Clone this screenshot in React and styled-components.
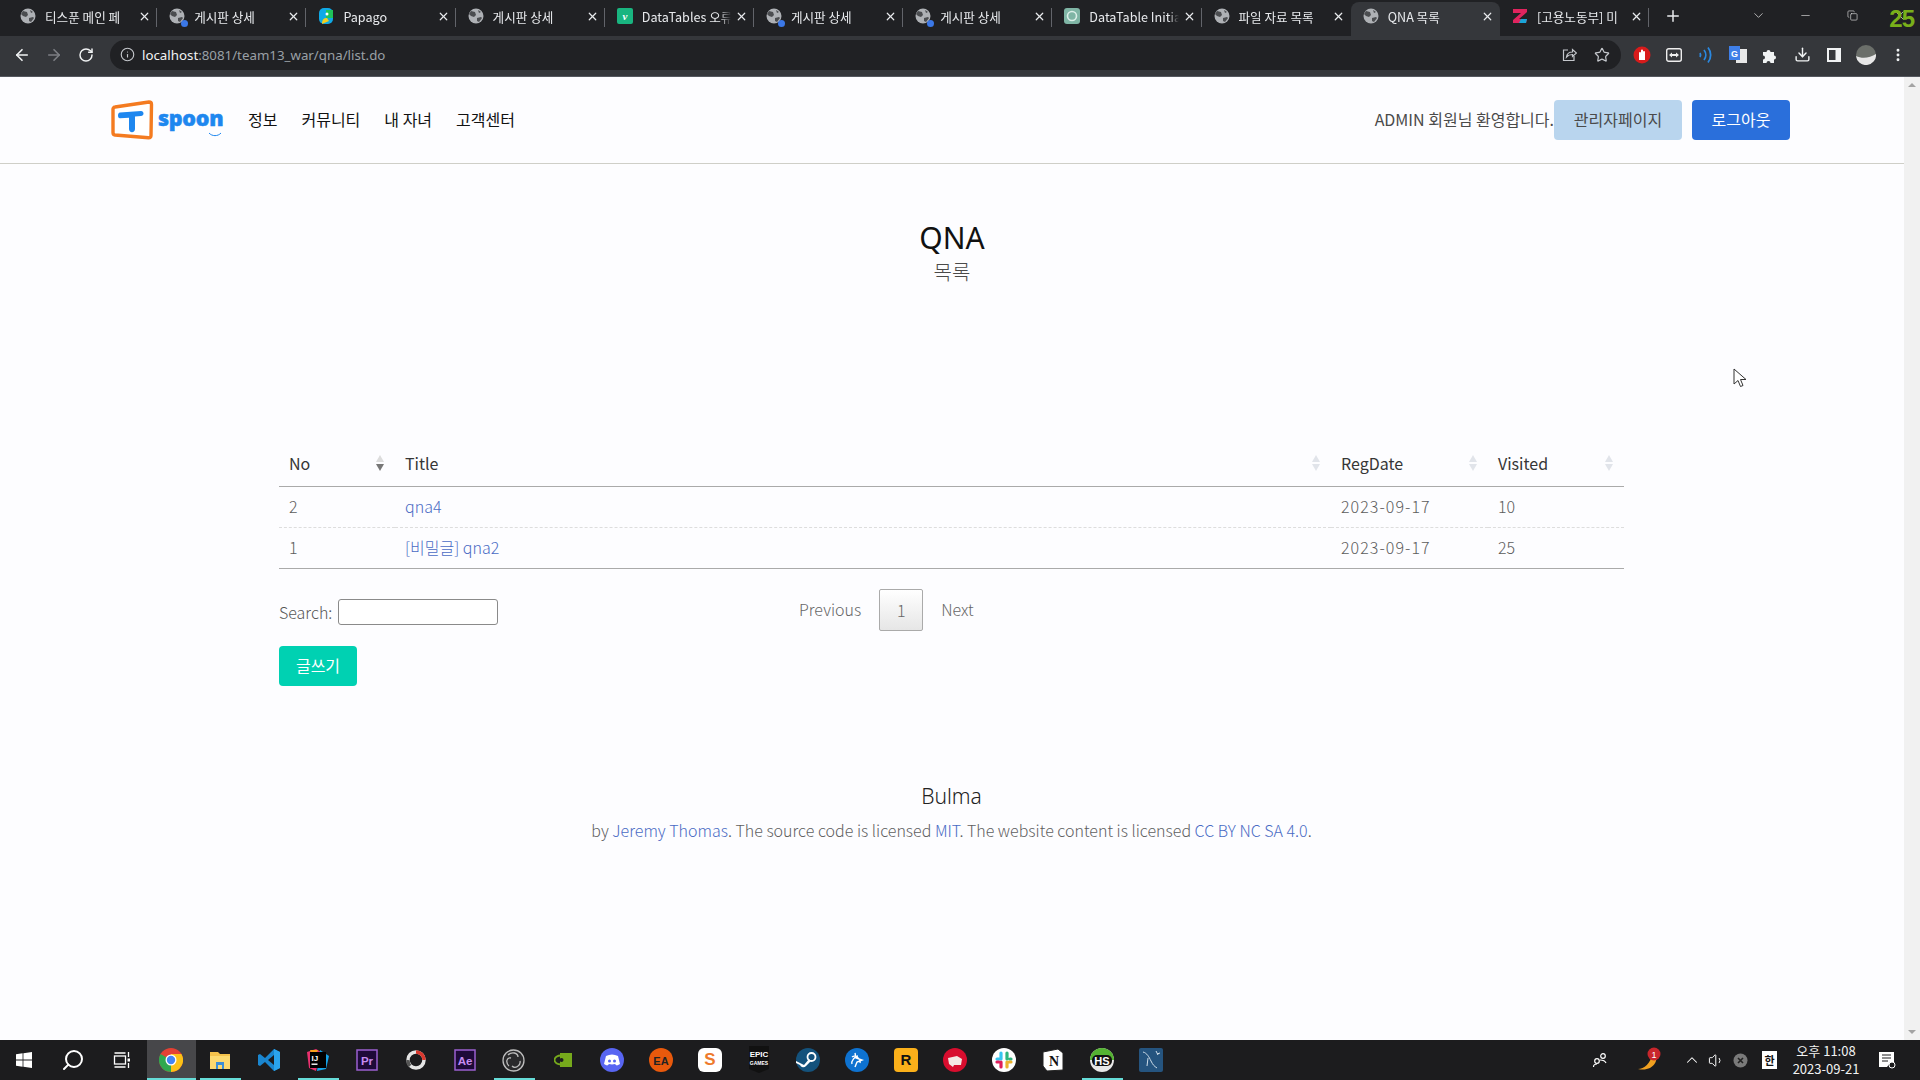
import React from 'react';
import styled, { createGlobalStyle } from 'styled-components';
import {
  ArrowLeft, ArrowRight, RotateCw, Info, Star, Download, EllipsisVertical, Search,
  Minus, X, Plus, ChevronDown, ChevronUp, Volume1, Copy,
} from 'lucide-react';

const GlobalStyle = createGlobalStyle`
  html, body { margin: 0; padding: 0; height: 100%; overflow: hidden; }
  body { font-family: "Noto Sans", "Noto Sans CJK KR", sans-serif; background: #fdfdff; }
  * { box-sizing: border-box; }
`;

const Screen = styled.div`
  position: relative;
  width: 1920px;
  height: 1080px;
  display: flex;
  flex-direction: column;
  overflow: hidden;
`;

/* browser chrome */
const TabStrip = styled.div`
  position: relative;
  height: 36px;
  flex: none;
  display: flex;
  align-items: stretch;
  padding: 0 0 0 8px;
  background: #202124;
  font-family: "Noto Sans CJK KR", "Noto Sans", sans-serif;
`;
const Tab = styled.div`
  width: 149.2px;
  flex: none;
  display: flex;
  align-items: center;
  margin-top: 2px;
  padding: 0 6px 6px 12px;
  gap: 9px;
  color: #e8eaed;
  font-size: 12.6px;
  border-radius: 8px 8px 0 0;
  background: ${p => (p.$active ? '#35373b' : 'transparent')};
  position: relative;
  &::after {
    content: '';
    position: absolute;
    right: 0;
    top: 6px;
    bottom: 9px;
    width: 1px;
    background: ${p => (p.$hideSep ? 'transparent' : '#62646a')};
  }
`;
const TabTitle = styled.span`
  flex: 1;
  min-width: 0;
  margin-right: -5px;
  white-space: nowrap;
  overflow: hidden;
  -webkit-mask-image: linear-gradient(to right, #000 88%, transparent 100%);
  mask-image: linear-gradient(to right, #000 88%, transparent 100%);
`;
const Favicon = styled.span`
  position: relative;
  width: 16px;
  height: 16px;
  flex: none;
  display: flex;
`;
const FavDot = styled.span`
  position: absolute;
  right: -3px;
  bottom: -3px;
  width: 7px;
  height: 7px;
  border-radius: 50%;
  background: #3b78e7;
`;
const NewTab = styled.div`
  width: 34px;
  margin-left: 7px;
  display: flex;
  align-items: center;
  justify-content: center;
  color: #e8eaed;
  padding-bottom: 5px;
`;
const WindowControls = styled.div`
  margin-left: auto;
  margin-right: -3px;
  display: flex;
  align-items: center;
  color: #e0e0e0;
  padding-bottom: 6px;
`;
const WinButton = styled.div`
  width: 47px;
  height: 30px;
  display: flex;
  align-items: center;
  justify-content: center;
`;
const Overlay25 = styled.span`
  position: absolute;
  right: 6px;
  top: 5px;
  font: bold 24px "Liberation Sans", sans-serif;
  letter-spacing: -1px;
  color: #79b01a;
`;
const Toolbar = styled.div`
  height: 41px;
  flex: none;
  display: flex;
  align-items: center;
  background: #35373b;
  border-bottom: 1px solid #55585f;
  padding: 0 8px 3px 6px;
  color: #e8eaed;
`;
const NavButton = styled.div`
  width: 32px;
  height: 32px;
  flex: none;
  display: flex;
  align-items: center;
  justify-content: center;
  color: ${p => (p.$dim ? '#7d7f84' : '#f1f3f4')};
`;
const Omnibox = styled.div`
  width: 1511px;
  height: 30px;
  margin-left: 8px;
  flex: none;
  display: flex;
  align-items: center;
  border-radius: 15px;
  background: #202124;
  padding: 0 11px 0 10px;
  gap: 7px;
  color: #9aa0a6;
  font-size: 13.300px;
`;
const UrlHost = styled.span`
  color: #f1f3f4;
`;
const OmniActions = styled.div`
  margin-left: auto;
  display: flex;
  align-items: center;
  gap: 17px;
  color: #c4c7cc;
`;
const ExtTray = styled.div`
  display: flex;
  align-items: center;
  margin-left: 5px;
`;
const ExtButton = styled.div`
  width: 32px;
  flex: none;
  display: flex;
  align-items: center;
  justify-content: center;
  color: #f1f3f4;
`;

/* page */
const Viewport = styled.div`
  flex: 1;
  min-height: 0;
  display: flex;
`;
const Page = styled.div`
  flex: 1;
  min-width: 0;
  background: #fdfdff;
  color: #4a4a4a;
  font-family: "Noto Sans CJK KR", "Noto Sans", sans-serif;
  font-size: 16px;
  font-weight: 300;
`;
const Scrollbar = styled.div`
  width: 16px;
  flex: none;
  background: #f1f1f1;
  display: flex;
  flex-direction: column;
  justify-content: space-between;
  align-items: center;
  padding: 6px 0;
`;
const ScrollArrow = styled.span`
  width: 0;
  height: 0;
  border-left: 4px solid transparent;
  border-right: 4px solid transparent;
  ${p => (p.$down ? 'border-top: 4px solid #a3a3a3;' : 'border-bottom: 4px solid #a3a3a3;')}
`;
const SiteHeader = styled.header`
  height: 87px;
  display: flex;
  align-items: center;
  padding: 0 114px 0 111px;
  border-bottom: 1px solid #cfcfc8;
`;
const Logo = styled.div`
  position: relative;
  width: 112px;
  height: 42px;
  flex: none;
  display: flex;
  align-items: center;
  gap: 3px;
`;
const LogoWord = styled.span`
  font: 800 21.500px/1 "Open Sans", Lato, sans-serif;
  letter-spacing: -.3px;
  -webkit-text-stroke: .5px #1e87ef;
  color: #1e87ef;
  margin-top: -4px;
`;
const LogoSmile = styled.svg`
  position: absolute;
  right: 1px;
  bottom: 4px;
`;
const SiteNav = styled.nav`
  display: flex;
  gap: 24px;
  margin-left: 25px;
  padding-bottom: 2px;
  color: #111;
  font-weight: 400;
`;
const UserBox = styled.div`
  margin-left: auto;
  display: flex;
  align-items: center;
`;
const Welcome = styled.span`
  color: #4a4a4a;
  font-weight: 400;
  padding-bottom: 2px;
  white-space: nowrap;
`;
const Button = styled.div`
  height: 40px;
  width: ${p => p.$w}px;
  margin-left: ${p => p.$ml || 0}px;
  padding-bottom: 2px;
  display: flex;
  align-items: center;
  justify-content: center;
  border-radius: 4px;
  background: ${p => p.$bg};
  color: ${p => p.$fg};
  font-weight: 400;
`;
const Hero = styled.div`
  padding-top: 54px;
  text-align: center;
`;
const HeroTitle = styled.h1`
  margin: 0;
  font-size: 30px;
  line-height: 40px;
  font-weight: 400;
  color: #111;
  font-family: "Noto Sans", sans-serif;
`;
const HeroSub = styled.h2`
  margin: 1px 0 0;
  font-size: 20px;
  line-height: 26px;
  font-weight: 300;
  color: #4a4a4a;
`;
const Content = styled.section`
  margin-top: 156px;
  padding: 0 280px 0 279px;
`;
const Table = styled.table`
  width: 100%;
  table-layout: fixed;
  border-collapse: collapse;
  border-bottom: 1px solid #aaa;
`;
const Th = styled.th`
  width: ${p => p.$w};
  height: 45px;
  padding: 0 10px;
  font-weight: 400;
  text-align: left;
  color: #363636;
  border-bottom: 1px solid #aaa;
`;
const ThInner = styled.div`
  display: flex;
  align-items: center;
  justify-content: space-between;
`;
const Td = styled.td`
  height: 41px;
  padding: 0 10px 2px;
  color: #5c5c5c;
`;
const DateTd = styled(Td)`
  letter-spacing: 1.05px;
`;
const Tr = styled.tr`
  & + & td { border-top: 1px dashed #ddd; }
`;
const Link = styled.a`
  color: #4a6bc4;
  text-decoration: none;
`;
const ControlRow = styled.div`
  display: flex;
  align-items: center;
  margin-top: 20px;
  height: 42px;
`;
const SearchBox = styled.label`
  width: 520px;
  flex: none;
  display: flex;
  align-items: center;
  gap: 6px;
  padding-top: 5px;
  color: #555;
`;
const SearchInput = styled.input`
  width: 160px;
  height: 26px;
  border: 1px solid #8a8a8a;
  border-radius: 3px;
  background: #fff;
  outline: 0;
`;
const Pagination = styled.div`
  display: flex;
  align-items: center;
  gap: 18px;
  color: #666;
`;
const PageLabel = styled.span`
  padding-bottom: 2px;
`;
const PageCurrent = styled.div`
  width: 44px;
  height: 42px;
  display: flex;
  align-items: center;
  justify-content: center;
  border: 1px solid #aaa;
  border-radius: 2px;
  background: linear-gradient(to bottom, #fff 0%, #e6e6e6 100%);
`;
const WriteRow = styled.div`
  margin-top: 15px;
`;
const SiteFooter = styled.footer`
  margin-top: 95px;
  text-align: center;
`;
const FooterTitle = styled.div`
  font-size: 21px;
  line-height: 30px;
  color: #222;
  font-family: "Noto Sans", sans-serif;
`;
const FooterText = styled.p`
  margin: 7px 0 0;
  line-height: 24px;
  font-size: 16px;
  color: #5f5f5f;
`;
const Cursor = styled.svg`
  position: absolute;
  left: 1733px;
  top: 368px;
`;

/* taskbar */
const Taskbar = styled.div`
  height: 40px;
  flex: none;
  display: flex;
  align-items: center;
  background: #1c1c1e;
  color: #fff;
  font-family: "Noto Sans CJK KR", "Noto Sans", sans-serif;
`;
const TaskItem = styled.div`
  position: relative;
  width: 49px;
  height: 40px;
  flex: none;
  display: flex;
  align-items: center;
  justify-content: center;
  padding-right: 2px;
  background: ${p => (p.$active ? '#47474a' : 'transparent')};
  &::after {
    content: '';
    display: ${p => (p.$open ? 'block' : 'none')};
    position: absolute;
    bottom: 0;
    left: ${p => (p.$active ? 0 : 4)}px;
    right: ${p => (p.$active ? 0 : 4)}px;
    height: 2px;
    background: #66dcd8;
  }
`;
const SysTray = styled.div`
  margin-left: auto;
  display: flex;
  align-items: center;
  height: 40px;
`;
const TrayItem = styled.div`
  width: ${p => p.$w}px;
  padding-right: ${p => p.$pr || 0}px;
  flex: none;
  display: flex;
  align-items: center;
  justify-content: center;
`;
const Clock = styled.div`
  width: 68px;
  margin-left: 6px;
  white-space: nowrap;
  display: flex;
  flex-direction: column;
  align-items: center;
  font-size: 13px;
  line-height: 18px;
  color: #f2f2f2;
`;

/* small drawings */
const Globe = () => (
  <svg width="16" height="16" viewBox="0 0 16 16">
    <circle cx="8" cy="8" r="7.5" fill="#aeb1b5" />
    <path d="M3 3l4 1 1 3-2 2-3-1-2-2zM9 10l4-1 1 1-3 4-2-1zM10 2l3 2-2 1z" fill="#4b4d50" />
  </svg>
);
const PapagoIcon = () => (
  <svg width="16" height="16" viewBox="0 0 16 16">
    <rect x="1" y="0" width="14" height="16" rx="5" fill="#0fa9e6" />
    <path d="M8 2h7v8H8z" fill="#1fc35a" />
    <circle cx="9" cy="6" r="1.5" fill="#fff" />
    <path d="M4 16c0-5 2-6 5-6l2 3z" fill="#f5d020" />
  </svg>
);
const VueIcon = () => (
  <svg width="16" height="16" viewBox="0 0 16 16">
    <rect width="16" height="16" rx="2" fill="#19b580" />
    <text x="8" y="12" fontSize="11" fontStyle="italic" fontWeight="700" textAnchor="middle" fill="#fff" fontFamily="Liberation Serif">v</text>
  </svg>
);
const GptIcon = () => (
  <svg width="16" height="16" viewBox="0 0 16 16">
    <rect width="16" height="16" rx="3" fill="#7fb5a5" />
    <circle cx="8" cy="8" r="4.5" fill="none" stroke="#dbeee8" strokeWidth="1.6" />
  </svg>
);
const ZIcon = () => (
  <svg width="16" height="16" viewBox="0 0 16 16">
    <path d="M1 1h14v3L7 11h8l-1 4H1v-3l8-7H1z" fill="#e0245e" />
    <path d="M9 11h6l-1 4H7z" fill="#1aa5d8" />
  </svg>
);
const Windows = () => (
  <svg width="16" height="16" viewBox="0 0 16 16" fill="#fff">
    <path d="M0 2.2l6.6-.9v6.2H0zM7.4 1.2L16 0v7.5H7.4zM0 8.4h6.6v6.3L0 13.8zM7.4 8.4H16V16l-8.6-1.2z" />
  </svg>
);
const TaskView = () => (
  <svg width="18" height="18" viewBox="0 0 18 18" fill="none" stroke="#fff" strokeWidth="1.3">
    <rect x="1.5" y="5" width="11" height="8" />
    <path d="M1.5 2h11M1.5 16h11M15.5 1v5M15.5 12v5" />
    <rect x="14.5" y="7.5" width="2.5" height="3" fill="#fff" stroke="none" />
  </svg>
);
const ChromeIcon = () => (
  <svg width="24" height="24" viewBox="0 0 24 24">
    <circle cx="12" cy="12" r="12" fill="#e44134" />
    <path d="M12 12L1.6 6A12 12 0 0 0 12 24l5-10z" fill="#2fa84f" />
    <path d="M12 6h10.4A12 12 0 0 1 12 24z" fill="#fbc116" />
    <circle cx="12" cy="12" r="5.5" fill="#fff" />
    <circle cx="12" cy="12" r="4.2" fill="#4385f4" />
  </svg>
);
const FolderIcon = () => (
  <svg width="22" height="22" viewBox="0 0 22 22">
    <path d="M1 3h8l2 2h10v15H1z" fill="#f3c14b" />
    <path d="M1 7h20v13H1z" fill="#fbd970" />
    <path d="M7 20v-7h8v7h-2v-4H9v4z" fill="#3c8fd6" />
  </svg>
);
const VSCodeIcon = () => (
  <svg width="24" height="24" viewBox="0 0 24 24">
    <path d="M17 1l6 3v16l-6 3-9-9-5 4-2-1v-10l2-1 5 4z" fill="#1a86d0" />
    <path d="M17 7l-6 5 6 5z" fill="#1c1c1e" />
    <path d="M17 1l6 3v16l-6 3z" fill="#2aa4ee" />
  </svg>
);
const IJIcon = () => (
  <svg width="24" height="24" viewBox="0 0 24 24">
    <path d="M1 4l9-3 5 3-5 19-7-3z" fill="#e8306e" />
    <path d="M14 2l9 6-3 13-9 2z" fill="#14a3e8" />
    <path d="M4 2l8 0-5 10z" fill="#f9a11b" />
    <rect x="4" y="4" width="16" height="16" fill="#000" />
    <text x="5.5" y="12.5" fontSize="8" fontWeight="700" fill="#fff" fontFamily="Liberation Sans">IJ</text>
    <rect x="5.5" y="15.5" width="6" height="1.4" fill="#fff" />
  </svg>
);
const AdobeIcon = ({ label }) => (
  <svg width="22" height="22" viewBox="0 0 22 22">
    <rect x="1" y="1" width="20" height="20" fill="#1e0a38" stroke="#9a5fd0" strokeWidth="1.5" />
    <text x="11" y="15.5" fontSize="11.5" fontWeight="700" textAnchor="middle" fill="#c68cf0" fontFamily="Liberation Sans">{label}</text>
  </svg>
);
const DavinciRing = () => (
  <svg width="22" height="22" viewBox="0 0 22 22" fill="none" strokeWidth="3.5">
    <circle cx="11" cy="11" r="8" stroke="#e5e5e5" />
    <path d="M11 3a8 8 0 0 1 8 8" stroke="#d9382e" />
    <path d="M5 17a8 8 0 0 1-2-6" stroke="#555" />
  </svg>
);
const ObsIcon = () => (
  <svg width="23" height="23" viewBox="0 0 23 23" fill="none" stroke="#bdbdbd" strokeWidth="1.3">
    <circle cx="11.5" cy="11.5" r="10.5" fill="#2a2a2c" />
    <path d="M6 6c4-4 10-2 10 2M18 12c1 5-5 8-8 5M7 17C3 13 5 8 9 9" />
  </svg>
);
const NvidiaIcon = () => (
  <svg width="18" height="14" viewBox="0 0 18 14">
    <rect x="6" y="0" width="12" height="14" fill="#76a91c" />
    <ellipse cx="7" cy="7" rx="6.5" ry="4.5" fill="none" stroke="#76a91c" strokeWidth="1.8" />
    <circle cx="7.5" cy="7" r="2" fill="#1c1c1e" />
  </svg>
);
const DiscordIcon = () => (
  <svg width="24" height="24" viewBox="0 0 24 24">
    <ellipse cx="12" cy="12" rx="12" ry="12" fill="#5865f2" />
    <path d="M6 8c4-2 8-2 12 0l2 8c-2 1-3 2-4 1l-1-1c-2 .6-4 .6-6 0l-1 1c-1 1-2 0-4-1z" fill="#fff" />
    <circle cx="9.5" cy="13" r="1.5" fill="#5865f2" />
    <circle cx="14.5" cy="13" r="1.5" fill="#5865f2" />
  </svg>
);
const BadgeIcon = ({ bg, fg, label, shape, size = 11, stroke }) => (
  <svg width="24" height="24" viewBox="0 0 24 24">
    {shape === 'circle'
      ? <circle cx="12" cy="12" r="12" fill={bg} />
      : <rect width="24" height="24" rx={shape === 'square' ? 4 : 6} fill={bg} stroke={stroke || 'none'} />}
    <text x="12" y="16.5" fontSize={size} fontWeight="700" textAnchor="middle" fill={fg} fontFamily="Liberation Sans">{label}</text>
  </svg>
);
const EpicIcon = () => (
  <svg width="20" height="28" viewBox="0 0 20 28">
    <path d="M0 0h20v23l-10 4-10-4z" fill="#111" />
    <text x="10" y="11" fontSize="8" fontWeight="700" textAnchor="middle" fill="#fff" fontFamily="Liberation Sans">EPIC</text>
    <text x="10" y="19" fontSize="5" fontWeight="700" textAnchor="middle" fill="#fff" fontFamily="Liberation Sans">GAMES</text>
  </svg>
);
const SteamIcon = () => (
  <svg width="24" height="24" viewBox="0 0 24 24">
    <circle cx="12" cy="12" r="12" fill="#14527c" />
    <circle cx="15.5" cy="9" r="4" fill="none" stroke="#fff" strokeWidth="1.8" />
    <path d="M0 13l8 4 5-6 2 2-5 5a3.5 3.5 0 0 1-6-1L0 15z" fill="#fff" />
  </svg>
);
const BattleIcon = () => (
  <svg width="24" height="24" viewBox="0 0 24 24">
    <circle cx="12" cy="12" r="12" fill="#0e72d0" />
    <path d="M10 5l1 5 6 2-5 2-2 5M7 9c4-3 9 3 8 6M7 16c-1-3 3-8 6-8" fill="none" stroke="#fff" strokeWidth="1.4" />
  </svg>
);
const RiotIcon = () => (
  <svg width="24" height="24" viewBox="0 0 24 24">
    <circle cx="12" cy="12" r="12" fill="#d80d2e" />
    <path d="M5 10l9-2 5 3-1 6H11l-1 2-4-3z" fill="#f4e8e4" />
  </svg>
);
const SlackIcon = () => (
  <svg width="24" height="24" viewBox="0 0 24 24" strokeWidth="3.2" strokeLinecap="round">
    <circle cx="12" cy="12" r="12" fill="#fff" />
    <path d="M9 5v6M5 11h2" stroke="#36c5f0" />
    <path d="M15 5v6M19 11h-1" stroke="#2eb67d" />
    <path d="M15 19v-5M19 14h-2" stroke="#ecb22e" />
    <path d="M9 19v-5M5 14h2" stroke="#e01e5a" />
  </svg>
);
const NotionIcon = () => (
  <svg width="24" height="24" viewBox="0 0 24 24">
    <path d="M2 4l15-3 5 4v17l-16 1-4-5z" fill="#fff" stroke="#222" strokeWidth="1" />
    <text x="13" y="18" fontSize="14" fontWeight="700" textAnchor="middle" fill="#111" fontFamily="Liberation Serif">N</text>
  </svg>
);
const HsIcon = () => (
  <svg width="24" height="24" viewBox="0 0 24 24">
    <circle cx="12" cy="12" r="12" fill="#e8e8e8" />
    <path d="M0 12a12 12 0 0 1 24 0z" fill="#54b232" />
    <rect x="2" y="7" width="20" height="11" rx="5" fill="#111" />
    <text x="12" y="16.5" fontSize="11" fontWeight="700" textAnchor="middle" fill="#fff" fontFamily="Liberation Sans">HS</text>
  </svg>
);
const MysqlIcon = () => (
  <svg width="24" height="24" viewBox="0 0 24 24">
    <rect width="24" height="24" rx="2" fill="#25547f" />
    <path d="M4 4c4 1 6 5 8 9s3 5 6 7M8 18l1-8M17 3l2 4M21 5l-3 1" fill="none" stroke="#cfdde9" strokeWidth="1" />
  </svg>
);
const TrayFlame = () => (
  <svg width="26" height="28" viewBox="0 0 26 28">
    <path d="M20 6c3 9-3 20-18 17 6 0 13-6 14-15z" fill="#f0a020" />
    <circle cx="18" cy="8" r="6.5" fill="#c8262c" />
    <text x="18" y="11.5" fontSize="9" textAnchor="middle" fill="#fff" fontFamily="Liberation Sans">1</text>
  </svg>
);
const People = () => (
  <svg width="16" height="16" viewBox="0 0 16 16" fill="none" stroke="#fff" strokeWidth="1.2">
    <circle cx="5" cy="9" r="2.3" />
    <circle cx="11" cy="4" r="2.3" />
    <path d="M1.5 15c0-2 1-3 3.5-3M8 8c2.5 0 5 .5 6 3" />
  </svg>
);
const MutedNet = () => (
  <svg width="15" height="15" viewBox="0 0 15 15">
    <circle cx="7.5" cy="7.5" r="7" fill="#7a7a7a" />
    <path d="M5 5l5 5M10 5l-5 5" stroke="#222" strokeWidth="1.6" />
  </svg>
);
const ImeBox = () => (
  <svg width="15" height="18" viewBox="0 0 15 18">
    <rect width="15" height="18" fill="#fff" />
    <text x="7.5" y="13.5" fontSize="11" fontWeight="700" textAnchor="middle" fill="#111" fontFamily="Noto Sans CJK KR">한</text>
  </svg>
);
const NotifyIcon = () => (
  <svg width="18" height="18" viewBox="0 0 18 18">
    <path d="M1 1h15v11h-4l-3 4H1z" fill="#fff" />
    <path d="M4 4h9M4 7h9M4 10h6" stroke="#1c1c1e" strokeWidth="1" />
    <circle cx="14" cy="14" r="3" fill="#1c1c1e" stroke="#fff" />
  </svg>
);
const ShareBox = () => (
  <svg width="15" height="15" viewBox="0 0 15 15" fill="none" stroke="#c4c7cc" strokeWidth="1.2">
    <path d="M6 3H1.5v10.5H12V9" />
    <path d="M4.5 10c.5-3.5 3-5 6-5V2.5L14.5 6l-4 3.5V7.5c-2.5 0-4.5.8-6 2.5z" />
  </svg>
);
const AdblockIcon = () => (
  <svg width="18" height="18" viewBox="0 0 18 18">
    <circle cx="9" cy="9" r="8.5" fill="#d81b1b" />
    <path d="M6 14V7a1 1 0 0 1 2 0V4.5a1 1 0 0 1 2 0V6a1 1 0 0 1 2 0v8z" fill="#fff" />
  </svg>
);
const MediaIcon = () => (
  <svg width="16" height="14" viewBox="0 0 16 14">
    <rect x=".7" y=".7" width="14.6" height="12.6" rx="2" fill="none" stroke="#eee" strokeWidth="1.4" />
    <path d="M3 7l3-2.5v5zM13 7l-3-2.5v5zM6 6h4v2H6z" fill="#eee" />
  </svg>
);
const WaveIcon = () => (
  <svg width="16" height="18" viewBox="0 0 16 18" fill="none" stroke="#2a88e0" strokeWidth="1.8">
    <path d="M2 7a4 4 0 0 1 0 4M6 4a8 8 0 0 1 0 10M10 1.500a12 12 0 0 1 0 15" />
  </svg>
);
const TranslateIcon = () => (
  <svg width="18" height="18" viewBox="0 0 18 18">
    <rect x="7" y="3" width="11" height="14" fill="#e8e8e8" />
    <rect x="0" y="0" width="11" height="14" fill="#3f7fe8" />
    <text x="5.5" y="10.5" fontSize="9" fontWeight="700" textAnchor="middle" fill="#fff" fontFamily="Liberation Sans">G</text>
  </svg>
);
const PuzzleIcon = () => (
  <svg width="16" height="16" viewBox="0 0 16 16" fill="#f1f3f4">
    <path d="M1 5h3.500a2 2 0 1 1 4 0H12v3.500a2 2 0 1 1 0 4V16H8.500a2 2 0 1 0-4 0H1v-3.500a2 2 0 1 0 0-4z" />
  </svg>
);
const SidePanel = () => (
  <svg width="14" height="14" viewBox="0 0 14 14">
    <path d="M0 0h14v14H0z" fill="#f1f3f4" />
    <path d="M2 2h6.500v10H2z" fill="#35373b" />
  </svg>
);
const Avatar = () => (
  <svg width="20" height="20" viewBox="0 0 20 20">
    <circle cx="10" cy="10" r="10" fill="#6b6f6a" />
    <path d="M0 11c6 3 14 2 20-2a10 10 0 0 1-20 2z" fill="#e7e7e7" />
  </svg>
);
const TLogo = () => (
  <svg width="44" height="42" viewBox="0 0 44 42" style={{ flex: 'none' }}>
    <path d="M4 8l34-5c1.500 0 2.500 1 2.500 2.500l-.5 31c0 1.500-1 2.500-2.500 2.300L4 36c-1.500-.2-2-1-2-2.500L2 10c0-1 1-2 2-2z" fill="#fff" stroke="#f47b20" strokeWidth="3.400" strokeLinejoin="round" />
    <path d="M9 13.500l21-1.500c1.500 0 2.500 1 2.500 2.500s-1 2.500-2.500 2.500l-6 .4V30c0 2-1.300 3.200-3 3.200s-3-1.200-3-3.200V18.800l-9 .5C7.700 19.400 7 18 7 16.500s.7-2.800 2-3z" fill="#1e87ef" />
  </svg>
);

const TABS = [
  { title: '티스푼 메인 페', icon: <Globe /> },
  { title: '게시판 상세', icon: <Globe />, dot: true },
  { title: 'Papago', icon: <PapagoIcon /> },
  { title: '게시판 상세', icon: <Globe /> },
  { title: 'DataTables 오류', icon: <VueIcon /> },
  { title: '게시판 상세', icon: <Globe />, dot: true },
  { title: '게시판 상세', icon: <Globe />, dot: true },
  { title: 'DataTable Initia', icon: <GptIcon /> },
  { title: '파일 자료 목록', icon: <Globe />, hideSep: true },
  { title: 'QNA 목록', icon: <Globe />, active: true, hideSep: true },
  { title: '[고용노동부] 미', icon: <ZIcon /> },
];

const TASK_ITEMS = [
  { icon: <Windows /> },
  { icon: <Search size={24} strokeWidth={2} style={{ transform: 'scaleX(-1)' }} /> },
  { icon: <TaskView /> },
  { icon: <ChromeIcon />, open: true, active: true },
  { icon: <FolderIcon />, open: true },
  { icon: <VSCodeIcon /> },
  { icon: <IJIcon />, open: true },
  { icon: <AdobeIcon label="Pr" /> },
  { icon: <DavinciRing /> },
  { icon: <AdobeIcon label="Ae" /> },
  { icon: <ObsIcon />, open: true },
  { icon: <NvidiaIcon /> },
  { icon: <DiscordIcon /> },
  { icon: <BadgeIcon bg="#e8590c" fg="#222" label="EA" shape="circle" /> },
  { icon: <BadgeIcon bg="#fff" fg="#ee7a2b" label="S" size={17} /> },
  { icon: <EpicIcon /> },
  { icon: <SteamIcon /> },
  { icon: <BattleIcon /> },
  { icon: <BadgeIcon bg="#fbb01a" fg="#111" label="R" size={15} shape="square" /> },
  { icon: <RiotIcon /> },
  { icon: <SlackIcon /> },
  { icon: <NotionIcon /> },
  { icon: <HsIcon />, open: true },
  { icon: <MysqlIcon /> },
];

const SortIcon = ({ active }) => (
  <svg width="10" height="18" viewBox="0 0 10 18">
    <path d="M5 1l4 7H1z" fill={active ? '#dcdcdc' : '#e1e4ea'} />
    <path d="M5 17l4-7H1z" fill={active ? '#777' : '#e1e4ea'} />
  </svg>
);

function App() {
  return (
    <Screen>
      <GlobalStyle />
      <TabStrip>
        {TABS.map((tab, i) => (
          <Tab key={i} $active={tab.active} $hideSep={tab.hideSep}>
            <Favicon>{tab.icon}{tab.dot && <FavDot />}</Favicon>
            <TabTitle>{tab.title}</TabTitle>
            <X size={13} strokeWidth={2.2} color="#e8eaed" style={{ flex: 'none' }} />
          </Tab>
        ))}
        <NewTab><Plus size={18} strokeWidth={2} /></NewTab>
        <WindowControls>
          <WinButton><ChevronDown size={15} strokeWidth={1.2} /></WinButton>
          <WinButton><Minus size={13} strokeWidth={1.2} /></WinButton>
          <WinButton><Copy size={11} strokeWidth={1.4} /></WinButton>
          <WinButton><X size={15} strokeWidth={1.2} /></WinButton>
        </WindowControls>
        <Overlay25>25</Overlay25>
      </TabStrip>

      <Toolbar>
        <NavButton><ArrowLeft size={18} strokeWidth={2.2} /></NavButton>
        <NavButton $dim><ArrowRight size={18} strokeWidth={2.2} /></NavButton>
        <NavButton><RotateCw size={16} strokeWidth={2.2} /></NavButton>
        <Omnibox>
          <Info size={15} strokeWidth={1.8} color="#c4c7cc" />
          <span><UrlHost>localhost</UrlHost>:8081/team13_war/qna/list.do</span>
          <OmniActions>
            <ShareBox />
            <Star size={16} strokeWidth={1.8} />
          </OmniActions>
        </Omnibox>
        <ExtTray>
          <ExtButton><AdblockIcon /></ExtButton>
          <ExtButton><MediaIcon /></ExtButton>
          <ExtButton><WaveIcon /></ExtButton>
          <ExtButton><TranslateIcon /></ExtButton>
          <ExtButton><PuzzleIcon /></ExtButton>
          <ExtButton><Download size={17} strokeWidth={2} /></ExtButton>
          <ExtButton><SidePanel /></ExtButton>
          <ExtButton><Avatar /></ExtButton>
          <ExtButton><EllipsisVertical size={16} strokeWidth={2.4} /></ExtButton>
        </ExtTray>
      </Toolbar>

      <Viewport>
        <Page>
          <SiteHeader>
            <Logo>
              <TLogo />
              <LogoWord>spoon</LogoWord>
              <LogoSmile width="14" height="5" viewBox="0 0 14 5">
                <path d="M1 1c3 3.500 9 3.500 12 0" fill="none" stroke="#1e87ef" strokeWidth="1" />
              </LogoSmile>
            </Logo>
            <SiteNav>
              <span>정보</span>
              <span>커뮤니티</span>
              <span>내 자녀</span>
              <span>고객센터</span>
            </SiteNav>
            <UserBox>
              <Welcome>ADMIN 회원님 환영합니다.</Welcome>
              <Button $w={128} $bg="#b9d5ee" $fg="#4a4a4a">관리자페이지</Button>
              <Button $w={98} $ml={10} $bg="#2a6fdb" $fg="#fff">로그아웃</Button>
            </UserBox>
          </SiteHeader>

          <Hero>
            <HeroTitle>QNA</HeroTitle>
            <HeroSub>목록</HeroSub>
          </Hero>

          <Content>
            <Table>
              <thead>
                <tr>
                  <Th $w="116px"><ThInner>No<SortIcon active /></ThInner></Th>
                  <Th><ThInner>Title<SortIcon /></ThInner></Th>
                  <Th $w="157px"><ThInner>RegDate<SortIcon /></ThInner></Th>
                  <Th $w="136px"><ThInner>Visited<SortIcon /></ThInner></Th>
                </tr>
              </thead>
              <tbody>
                <Tr>
                  <Td>2</Td>
                  <Td><Link>qna4</Link></Td>
                  <DateTd>2023-09-17</DateTd>
                  <Td>10</Td>
                </Tr>
                <Tr>
                  <Td>1</Td>
                  <Td><Link>[비밀글] qna2</Link></Td>
                  <DateTd>2023-09-17</DateTd>
                  <Td>25</Td>
                </Tr>
              </tbody>
            </Table>

            <ControlRow>
              <SearchBox>Search:<SearchInput type="search" /></SearchBox>
              <Pagination>
                <PageLabel>Previous</PageLabel>
                <PageCurrent>1</PageCurrent>
                <PageLabel>Next</PageLabel>
              </Pagination>
            </ControlRow>

            <WriteRow>
              <Button $w={78} $bg="#00d1b2" $fg="#fff">글쓰기</Button>
            </WriteRow>

            <SiteFooter>
              <FooterTitle>Bulma</FooterTitle>
              <FooterText>
                by <Link>Jeremy Thomas</Link>. The source code is licensed <Link>MIT</Link>. The website content is licensed <Link>CC BY NC SA 4.0</Link>.
              </FooterText>
            </SiteFooter>
          </Content>
        </Page>
        <Scrollbar>
          <ScrollArrow />
          <ScrollArrow $down />
        </Scrollbar>
      </Viewport>

      <Taskbar>
        {TASK_ITEMS.map((item, i) => (
          <TaskItem key={i} $open={item.open} $active={item.active}>{item.icon}</TaskItem>
        ))}
        <SysTray>
          <TrayItem $w={36}><People /></TrayItem>
          <TrayItem $w={62}><TrayFlame /></TrayItem>
          <TrayItem $w={24}><ChevronUp size={18} strokeWidth={1.4} /></TrayItem>
          <TrayItem $w={24}><Volume1 size={17} strokeWidth={1.4} /></TrayItem>
          <TrayItem $w={24}><MutedNet /></TrayItem>
          <TrayItem $w={34}><ImeBox /></TrayItem>
          <Clock><span>오후 11:08</span><span>2023-09-21</span></Clock>
          <TrayItem $w={60} $pr={6}><NotifyIcon /></TrayItem>
        </SysTray>
      </Taskbar>

      <Cursor width="14" height="20" viewBox="0 0 14 20">
        <path d="M1 1v15l4-3.500 2.500 6 2.500-1-2.500-6H13z" fill="#fff" stroke="#333" strokeWidth="1" />
      </Cursor>
    </Screen>
  );
}

export default App;
